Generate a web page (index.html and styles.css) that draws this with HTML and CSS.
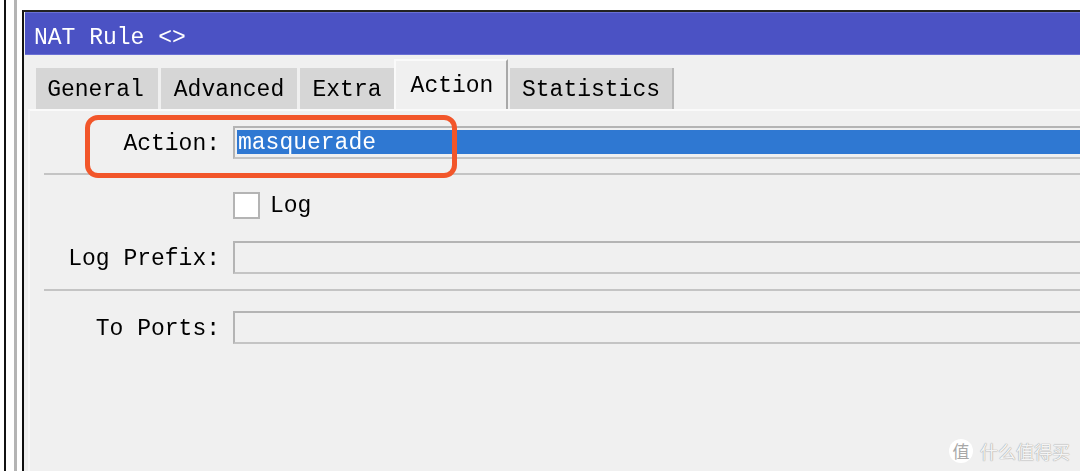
FILE: index.html
```html
<!DOCTYPE html>
<html lang="en">
  <head>
    <meta charset="UTF-8" />
    <meta name="viewport" content="width=device-width, initial-scale=1.0" />
    <title>NAT Rule</title>
    <link rel="stylesheet" href="styles.css">
  </head>
  <body>
    <div class="stripes">
      <div class="window">
        <div class="titlebar">NAT Rule &lt;&gt;</div>
        <div class="tabs">
          <div class="tab tab-general">General</div>
          <div class="tab tab-advanced">Advanced</div>
          <div class="tab tab-extra">Extra</div>
          <div class="tab tab-active">Action</div>
          <div class="tab tab-statistics">Statistics</div>
        </div>
        <div class="panel">
          <div class="row row-action">
            <label class="label">Action:</label>
            <div class="field field-selected"><span class="selected-fill">masquerade</span></div>
          </div>
          <hr class="sep sep-first" />
          <div class="row row-log">
            <span class="checkbox"></span>
            <span class="check-label">Log</span>
          </div>
          <div class="row row-prefix">
            <label class="label">Log Prefix:</label>
            <div class="field"></div>
          </div>
          <hr class="sep sep-second" />
          <div class="row row-ports">
            <label class="label">To Ports:</label>
            <div class="field"></div>
          </div>
          <div class="highlight"></div>
        </div>
      </div>
    </div>
    <div class="watermark">
      <span class="watermark-badge">值</span>
      <span class="watermark-text">什么值得买</span>
    </div>
  </body>
</html>
```

FILE: styles.css
```css
html,
body {
  height: 100%;
}
body {
  margin: 0;
  overflow: hidden;
  background: white;
  font-family: "Liberation Mono", "Noto Sans CJK SC", monospace;
  font-size: 23px;
  color: #000;
}
.stripes {
  height: 100%;
  box-sizing: border-box;
  padding: 10px 0 0 22px;
  filter: blur(0.5px);
  background:
    linear-gradient(#111, #111) 4px 0 / 2px 100% no-repeat,
    linear-gradient(#b4b4b4, #b4b4b4) 14px 0 / 3px 100% no-repeat,
    white;
}
.window {
  display: flex;
  flex-direction: column;
  height: 100%;
  box-sizing: border-box;
  border-left: 2px solid #111;
  border-top: 2px solid #222;
  background: #f0f0f0;
  padding-left: 1px;
}
.titlebar {
  flex: none;
  height: 43px;
  line-height: 50px;
  padding-left: 9px;
  background: #4b52c4;
  border-top: 1px solid #6a70d4;
  border-bottom: 1px solid #6a70d4;
  box-sizing: border-box;
  color: white;
}
.tabs {
  flex: none;
  display: flex;
  align-items: flex-end;
  gap: 3px;
  height: 54px;
  padding-left: 11px;
}
.tab {
  height: 41px;
  box-sizing: border-box;
  line-height: 45px;
  text-align: center;
  background: #d6d6d6;
}
.tab-general {
  width: 122px;
  padding-right: 3px;
}
.tab-advanced {
  width: 136px;
}
.tab-extra {
  width: 94px;
}
.tab-active {
  width: 114px;
  height: 50px;
  margin: 0 -1px 0 -3px;
  padding-left: 2px;
  line-height: 50px;
  background: #f0f0f0;
  border-top: 2px solid #fafafa;
  border-left: 2px solid #fafafa;
  border-right: 2px solid #a8a8a8;
}
.tab-statistics {
  width: 164px;
  border-right: 2px solid #b8b8b8;
}
.panel {
  position: relative;
  flex: 1;
  min-height: 0;
  margin-left: 3px;
  border-top: 2px solid #fafafa;
  border-left: 2px solid #f8f8f8;
}
.row {
  display: flex;
  align-items: center;
  height: 33px;
}
.label {
  width: 190px;
  padding-top: 3px;
  text-align: right;
  margin-right: 13px;
  flex: none;
}
.field {
  flex: 1;
  align-self: stretch;
  box-sizing: border-box;
  border: 2px solid #b4b4b4;
  border-right: none;
  border-bottom-color: #c4c4c4;
}
.field-selected {
  padding: 2px 0 3px 2px;
  display: flex;
}
.selected-fill {
  flex: 1;
  padding: 2px 0 0 1px;
  background: #2f78d2;
  color: white;
  line-height: 22px;
}
.row-action {
  margin-top: 15px;
}
.sep {
  height: 2px;
  margin: 0 0 0 14px;
  border: none;
  background: #c4c4c4;
}
.sep-first {
  margin-top: 14px;
}
.row-log {
  margin-top: 16px;
  height: 28px;
  padding-left: 203px;
}
.checkbox {
  width: 27px;
  height: 27px;
  box-sizing: border-box;
  border: 2px solid #b4b4b4;
  background: white;
  margin-right: 10px;
}
.check-label {
  padding-top: 2px;
}
.row-prefix {
  margin-top: 22px;
}
.sep-second {
  margin-top: 15px;
}
.row-ports {
  margin-top: 20px;
}
.highlight {
  position: absolute;
  left: 55px;
  top: 4px;
  width: 372px;
  height: 63px;
  box-sizing: border-box;
  border: 5px solid #f2562a;
  border-radius: 13px;
}
.watermark {
  position: absolute;
  right: 10px;
  bottom: 7px;
  display: flex;
  align-items: center;
  gap: 7px;
  font-family: "Noto Sans CJK SC", sans-serif;
}
.watermark-badge {
  width: 24px;
  height: 24px;
  border-radius: 50%;
  background: white;
  color: #a8a8a8;
  font-size: 17px;
  line-height: 24px;
  text-align: center;
}
.watermark-text {
  font-size: 18px;
  color: #f4f4f4;
  text-shadow: 0 0 1px #a0a0a0, 0 0 1px #a0a0a0;
}
```
